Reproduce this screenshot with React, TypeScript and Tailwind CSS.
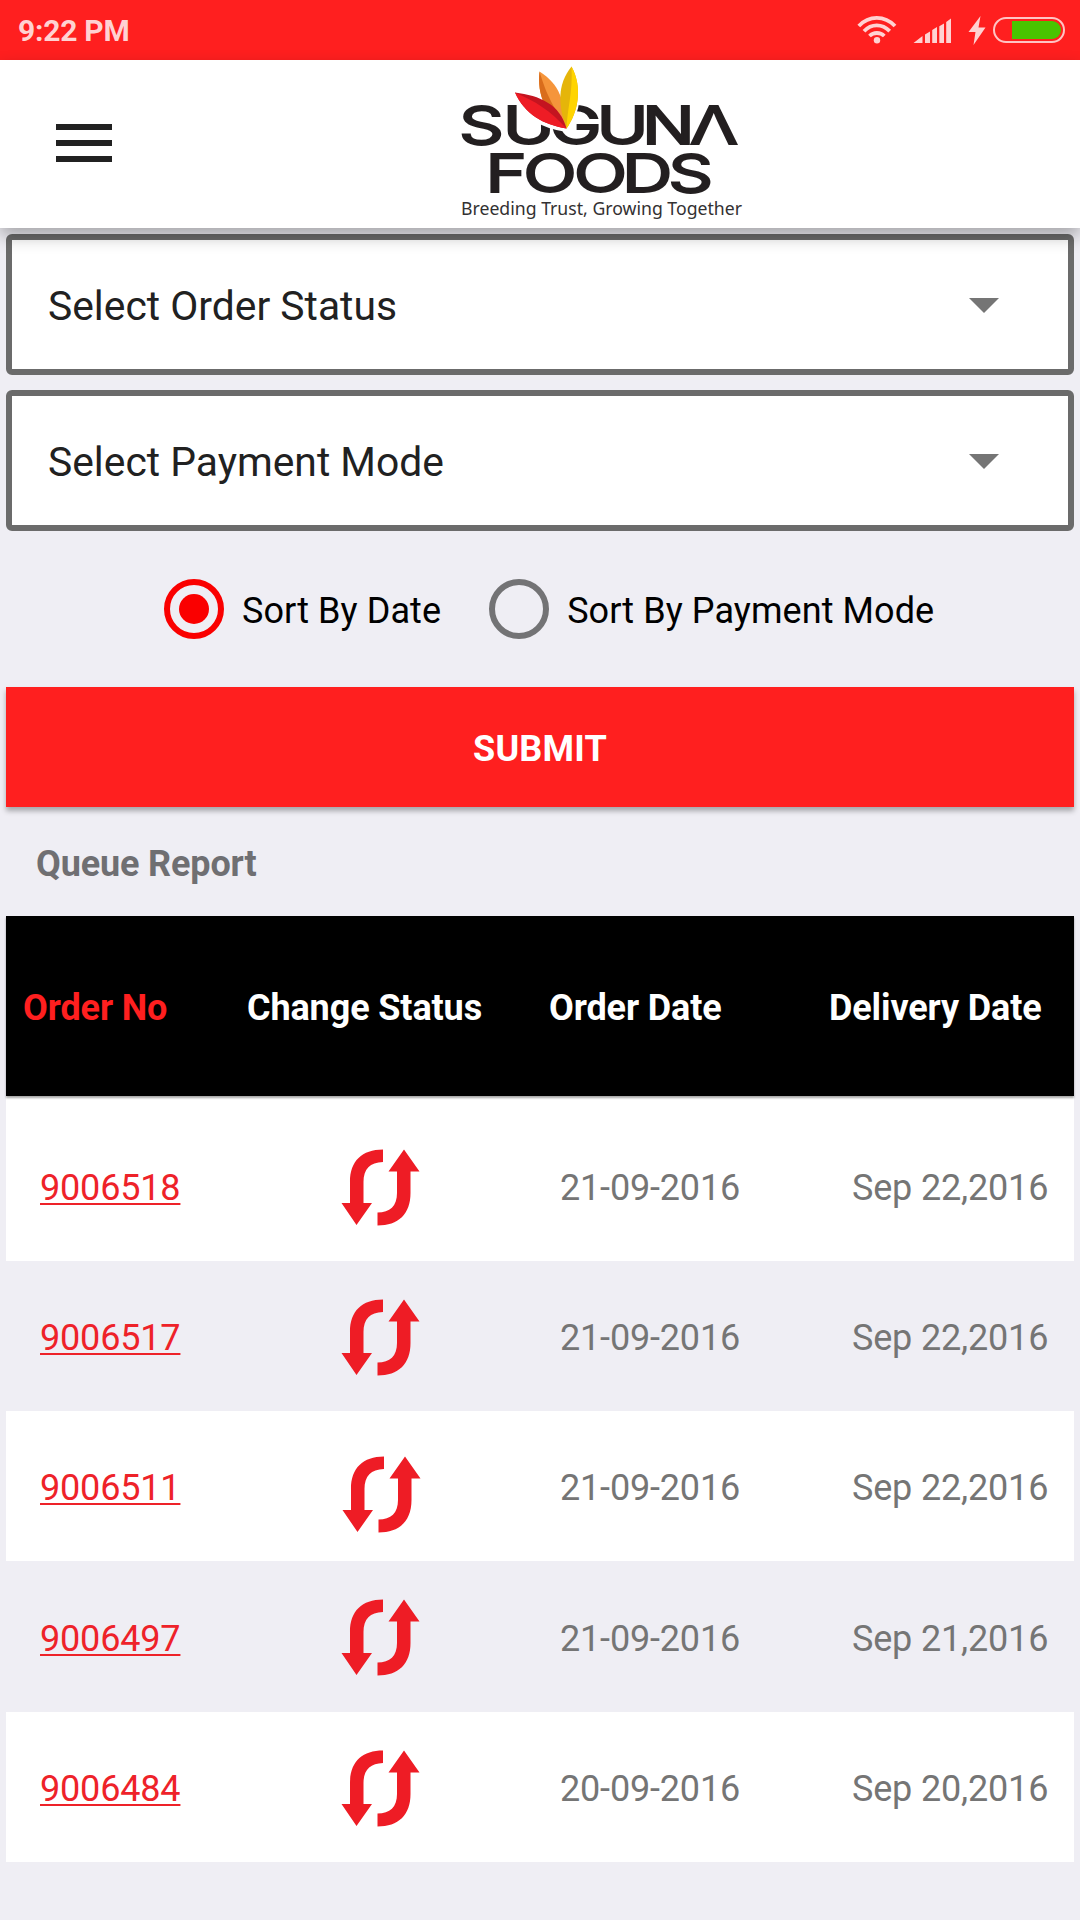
import { useState } from "react";

const orders = [
  { no: "9006518", orderDate: "21-09-2016", deliveryDate: "Sep 22,2016", row: "h-[165px] bg-white pt-[19px]", icon: "" },
  { no: "9006517", orderDate: "21-09-2016", deliveryDate: "Sep 22,2016", row: "h-[150px] pt-1", icon: "" },
  { no: "9006511", orderDate: "21-09-2016", deliveryDate: "Sep 22,2016", row: "h-[150px] bg-white pt-1", icon: "mt-[13px] ml-[1px]" },
  { no: "9006497", orderDate: "21-09-2016", deliveryDate: "Sep 21,2016", row: "h-[151px] pt-1", icon: "-mt-[1px]" },
  { no: "9006484", orderDate: "20-09-2016", deliveryDate: "Sep 20,2016", row: "h-[150px] bg-white pt-1", icon: "" },
];

function StatusBar() {
  return (
    <div className="flex h-[60px] items-center justify-between bg-[#ff1f1f] pl-[18px] pr-[13px]">
      <span className="pt-px text-[30px] leading-[60px] font-bold tracking-[-0.25px] text-[#ffd2d2]">9:22 PM</span>
      <svg width="210" height="30" viewBox="857 15 210 30" fill="#ffd2d2">
        <g fill="none" stroke="#ffd2d2" strokeWidth="3.8">
          <path d="M858.8 26 C869 15.2 884.500 15.2 895 26" />
          <path d="M864 31.200 C871.500 23.400 882 23.400 889.700 31.200" />
          <path d="M869.500 36 C873.600 32 880.200 32 884.300 36" />
        </g>
        <circle cx="877" cy="40.200" r="3.200" />
        <path d="M913.500 43 L922.500 36 V43 Z M925 34.500 L930 31.500 V43 H925 Z M932.200 30 L937 27 V43 H932.200 Z M939.300 26.300 L944 23.400 V43 H939.300 Z M946.200 22 L951 18.500 V43 H946.200 Z" />
        <path d="M980.500 16 L968.500 32 H975.500 L973.500 45 L985.500 27.500 H978.500 Z" />
        <rect x="994" y="18" width="70" height="24" rx="12" fill="none" stroke="#ffc4c4" strokeWidth="2" />
        <path d="M1012 21 H1052 A9 9 0 0 1 1052 39 H1012 Z" fill="#48c400" />
      </svg>
    </div>
  );
}

function Logo() {
  return (
    <svg width="320" height="168" viewBox="0 5 320 168" className="ml-[328px]">
      <g fill="#231f20" stroke="#231f20" strokeWidth="1.8" fontFamily="Inter" fontWeight="400">
        <text transform="translate(0 89.300) scale(1.36 1)" fontSize="51.500" x="14 46.200 80.600 115 148.500 183.700">SUGUNΛ</text>
        <text transform="translate(0 137) scale(1.36 1)" fontSize="51.500" x="33.500 61.300 98.400 133.800 167.800">FOODS</text>
      </g>
      <g transform="translate(0 -4.500)">
        <path d="M74 41 C95 45 117 52 127 79 C103 76 85 66 74 41 Z" fill="#fff" stroke="#fff" strokeWidth="5" />
        <path d="M131.500 16 C143 37 138 62 126.500 78 C118 55 117 34 131.500 16 Z" fill="#fff" stroke="#fff" strokeWidth="4" />
        <path d="M99.500 21 C120 34 124 50 127 78 C105 64 97 44 99.500 21 Z" fill="#f5953b" />
        <path d="M99.500 21 C106 43 112 54 127 78 C105 64 97 44 99.500 21 Z" fill="#d96d1c" />
        <path d="M131.500 16 C143 37 138 62 126.500 78 C118 55 117 34 131.500 16 Z" fill="#e5b50a" />
        <path d="M131.500 16 C143 37 138 62 126.500 78 C127 60 133 42 131.500 16 Z" fill="#ffd400" />
        <path d="M75 42 C100 45 120 54 126.500 78 C103 74 85 64 75 42 Z" fill="#c41420" />
        <path d="M75 42 C96 51 110 60 126.500 78 C103 74 85 64 75 42 Z" fill="#ee1c25" />
      </g>
      <text x="21" y="159.500" fontFamily="Noto Sans" fontSize="18.500" textLength="281" lengthAdjust="spacingAndGlyphs" fill="#333132">
        Breeding Trust, Growing Together
      </text>
    </svg>
  );
}

function Header() {
  return (
    <header className="relative z-10 flex h-[168px] items-start bg-white pl-14 shadow-[0_8px_16px_rgba(0,0,0,0.3)]">
      <button type="button" className="mt-16 flex w-14 flex-col gap-[10px]">
        <span className="h-[6px] w-full bg-[#212121]" />
        <span className="h-[6px] w-full bg-[#212121]" />
        <span className="h-[6px] w-full bg-[#212121]" />
      </button>
      <Logo />
    </header>
  );
}

function SelectBox({ label }: { label: string }) {
  return (
    <div className="flex h-[141px] items-center justify-between rounded-[6px] border-[6px] border-[#6b6b6b] bg-white pt-[3px] pl-9 pr-[69px]">
      <span className="text-[40.8px] leading-[48px] text-[#212121]">{label}</span>
      <svg width="30" height="15" viewBox="0 0 30 15" className="-mt-[2px]">
        <path d="M0 0 H30 L15 15 Z" fill="#757575" />
      </svg>
    </div>
  );
}

function Radio({ label, checked, onClick }: { label: string; checked: boolean; onClick: () => void }) {
  return (
    <button type="button" onClick={onClick} className="flex items-center gap-[18px]">
      <span className={`flex h-[60px] w-[60px] items-center justify-center rounded-full border-[6px] ${checked ? "border-[#fa0000]" : "border-[#737375]"}`}>
        {checked && <span className="h-[30px] w-[30px] rounded-full bg-[#fa0000]" />}
      </span>
      <span className="mt-[3px] text-[36px] leading-[42px] tracking-[0.08px] whitespace-nowrap text-black">{label}</span>
    </button>
  );
}

function ChangeStatusIcon({ className }: { className: string }) {
  return (
    <svg width="80" height="78" viewBox="0 0 80 78" fill="#ee1c25" className={className}>
      <path d="M43 .5 V13 C30 13.500 23.500 20 23.500 33 V54 H32 L16.500 76 L1.500 54 H10 V33 C10 12 22 .5 43 .5 Z" />
      <path d="M37.500 76.500 V63.500 C50 63.500 57 57 57 44 V22.500 H48.500 L64 .5 L79.500 22.500 H70.500 V44 C70.500 65 58.500 76.500 37.500 76.500 Z" />
    </svg>
  );
}

export default function App() {
  const [sort, setSort] = useState("date");

  return (
    <div className="h-[1920px] w-[1080px] overflow-hidden bg-[#efeef4] font-['Roboto',sans-serif]">
      <StatusBar />
      <Header />
      <main className="px-[6px] pt-[6px]">
        <div className="space-y-[15px]">
          <SelectBox label="Select Order Status" />
          <SelectBox label="Select Payment Mode" />
        </div>

        <div className="mt-12 flex pl-[158px] gap-12">
          <Radio label="Sort By Date" checked={sort === "date"} onClick={() => setSort("date")} />
          <Radio label="Sort By Payment Mode" checked={sort === "payment"} onClick={() => setSort("payment")} />
        </div>

        <button type="button" className="mt-12 block h-[120px] w-full bg-[#ff1f1f] pt-[3px] text-[36px] font-bold tracking-[0.2px] text-white shadow-[0_4px_5px_rgba(0,0,0,0.3)]">
          SUBMIT
        </button>

        <h2 className="h-[109px] pt-9 pl-[30px] text-[36px] leading-[42px] font-bold tracking-[-0.15px] text-[#6f6f72]">Queue Report</h2>

        <div className="relative flex h-[180px] items-center bg-black pl-[17px] pt-[3px] text-[36px] font-bold tracking-[-0.12px] whitespace-nowrap text-white shadow-[0_2px_2px_rgba(0,0,0,0.35)]">
          <span className="w-[224px] text-[#ff1f1f]">Order No</span>
          <span className="w-[302px]">Change Status</span>
          <span className="w-[280px]">Order Date</span>
          <span>Delivery Date</span>
        </div>

        {orders.map((o) => (
          <div key={o.no} className={`flex items-center text-[36px] tracking-[-0.17px] whitespace-nowrap text-[#757575] ${o.row}`}>
            <a className="w-[294px] pl-[34px] text-[#ee2229] underline decoration-2 underline-offset-[3px]">{o.no}</a>
            <div className="w-[260px] pl-[39.5px]">
              <ChangeStatusIcon className={o.icon} />
            </div>
            <span className="w-[292px]">{o.orderDate}</span>
            <span>{o.deliveryDate}</span>
          </div>
        ))}
      </main>
    </div>
  );
}
